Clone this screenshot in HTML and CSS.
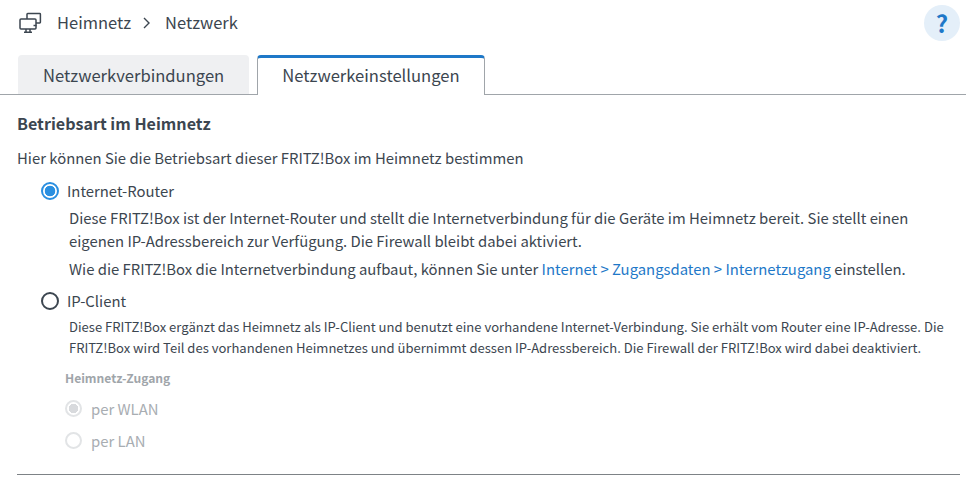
FILE: index.html
```html
<!DOCTYPE html>
<html lang="de">
<head>
<meta charset="utf-8">
<title>Netzwerk</title>
<link rel="stylesheet" href="styles.css">
</head>
<body>
<header class="top">
  <svg class="nav-icon" width="24" height="24" viewBox="0 0 24 24" fill="none" stroke="#3c4650" stroke-width="1.5">
    <path d="M9 8V3.2c0-.4.3-.7.7-.7h12c.4 0 .7.3.7.7v8.1c0 .4-.3.7-.7.7h-3.7"/>
    <path d="M15.5 14.5h3"/>
    <rect x="2" y="8" width="16" height="10" rx="1"/>
    <path d="M8 18v3M12 18v3M6 21.2h8"/>
  </svg>
  <span class="crumb">Heimnetz</span>
  <svg class="chev" width="8" height="12" viewBox="0 0 8 12" fill="none" stroke="#3c4650" stroke-width="1.4"><path d="M1 1l5 5-5 5"/></svg>
  <span class="crumb">Netzwerk</span>
  <span class="help">?</span>
</header>
<nav class="tabs">
  <a class="tab">Netzwerkverbindungen</a>
  <a class="tab active">Netzwerkeinstellungen</a>
</nav>
<main class="content">
  <h2 class="title">Betriebsart im Heimnetz</h2>
  <p class="intro">Hier können Sie die Betriebsart dieser FRITZ!Box im Heimnetz bestimmen</p>
  <label class="opt"><span class="radio checked"></span>Internet-Router</label>
  <div class="desc">
    <p class="d1">Diese FRITZ!Box ist der Internet-Router und stellt die Internetverbindung für die Geräte im Heimnetz bereit. Sie stellt einen<br>eigenen IP-Adressbereich zur Verfügung. Die Firewall bleibt dabei aktiviert.</p>
    <p class="d2">Wie die FRITZ!Box die Internetverbindung aufbaut, können Sie unter <a class="link">Internet &gt; Zugangsdaten &gt; Internetzugang</a> einstellen.</p>
  </div>
  <label class="opt second"><span class="radio"></span>IP-Client</label>
  <p class="small">Diese FRITZ!Box ergänzt das Heimnetz als IP-Client und benutzt eine vorhandene Internet-Verbindung. Sie erhält vom Router eine IP-Adresse. Die<br>FRITZ!Box wird Teil des vorhandenen Heimnetzes und übernimmt dessen IP-Adressbereich. Die Firewall der FRITZ!Box wird dabei deaktiviert.</p>
  <h3 class="sub">Heimnetz-Zugang</h3>
  <label class="opt2 first"><span class="radio2 checked"></span>per WLAN</label>
  <label class="opt2"><span class="radio2"></span>per LAN</label>
  <hr class="rule">
</main>
</body>
</html>
```
FILE: styles.css
```css
* { box-sizing: border-box; }
html, body { margin: 0; padding: 0; }
body {
  width: 966px;
  height: 482px;
  overflow: hidden;
  background: #fff;
  color: #3c4650;
  font-family: "Noto Sans CJK SC", "Noto Sans", sans-serif;
  font-size: 14.87px;
}
p, h2, h3 { margin: 0; }
.top {
  display: flex;
  align-items: center;
  height: 55px;
  padding: 0 6px 9px 18px;
}
.nav-icon { margin-right: 15px; }
.crumb { font-size: 16.5px; line-height: 24px; margin-top: -2px; }
.chev { margin: 0 14px 0 12px; }
.help {
  margin-left: auto;
  width: 36px;
  height: 36px;
  border-radius: 50%;
  background: #e4eff9;
  color: #1e78c8;
  font-size: 24px;
  font-weight: 700;
  line-height: 36px;
  text-align: center;
}
.tabs {
  display: flex;
  gap: 8px;
  height: 40px;
  padding-left: 18px;
  border-bottom: 1px solid #a0a5aa;
}
.tab {
  height: 39px;
  padding: 0 25px;
  font-size: 16.6px;
  line-height: 41px;
  background: #eff0f2;
  border-radius: 4px 4px 0 0;
}
.tab.active {
  height: 40px;
  line-height: 35px;
  background: #fff;
  border: 1px solid #a0a5aa;
  border-top: 3px solid #1e78c8;
  border-bottom: 0;
  padding: 0 24px;
  position: relative;
  z-index: 1;
}
.content { padding: 0 0 0 17px; }
.title { font-size: 16.1px; font-weight: 700; line-height: 24px; margin-top: 16px; }
.intro { line-height: 22px; margin-top: 12px; }
.opt {
  display: flex;
  align-items: center;
  gap: 8px;
  height: 24px;
  margin: 10px 0 0 24px;
  line-height: 24px;
}
.opt.second { margin-top: 9px; }
.radio {
  width: 18px;
  height: 18px;
  border-radius: 50%;
  border: 2px solid #3c4650;
  background: #fff;
}
.radio.checked {
  border-color: #2a8fe0;
  background: radial-gradient(circle, #2a8fe0 0 5px, #fff 5.6px);
}
.desc { margin-left: 52px; }
.d1 { line-height: 23px; margin-top: 3px; }
.d2 { line-height: 23px; margin-top: 5px; }
.link { color: #1e78c8; }
.small { font-size: 13.05px; line-height: 20.5px; margin: 4px 0 0 52px; white-space: nowrap; }
.sub { font-size: 12.1px; font-weight: 700; color: #a0a5aa; line-height: 18px; margin: 11px 0 0 48px; }
.opt2 {
  display: flex;
  align-items: center;
  gap: 9px;
  height: 24px;
  margin: 8px 0 0 48px;
  color: #a8adb2;
}
.opt2.first { margin-top: 9px; }
.radio2 {
  width: 17px;
  height: 17px;
  border-radius: 50%;
  border: 2px solid #e2e4e6;
  background: #fff;
}
.radio2.checked { background: radial-gradient(circle, #d8dadd 0 4.5px, #fff 5px); }
.rule { border: 0; height: 1px; background: #7d8286; margin: 22px 0 0 0; width: 943px; }
```
